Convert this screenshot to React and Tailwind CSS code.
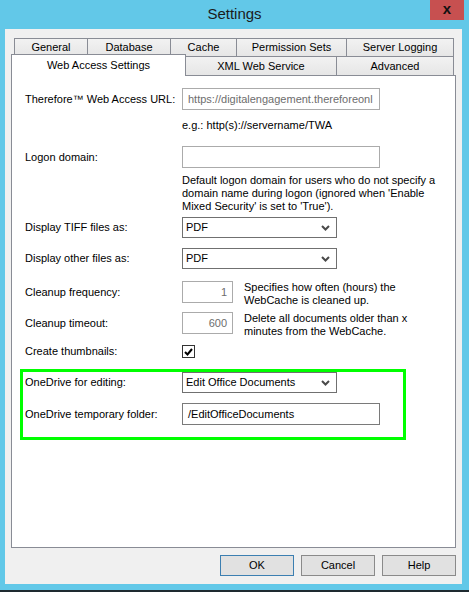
import React from "react";

const font = "font-['Liberation_Sans',Arial,sans-serif]";

const Chevron = () => (
  <svg width="9" height="6" viewBox="0 0 9 6" className="shrink-0">
    <path d="M1 1 L4.5 4.5 L8 1" fill="none" stroke="#4a4a4a" strokeWidth="2" />
  </svg>
);

const Row = ({ label, children, className = "", labelWidth = "w-[157px]" }) => (
  <div className={`flex items-center ${className}`}>
    <div className={`${labelWidth} shrink-0`}>{label}</div>
    {children}
  </div>
);

const TextBox = ({ value = "", width = "w-[198px]", disabled, dark, align = "left" }) => (
  <div
    className={`flex h-[22px] ${width} items-center border bg-white px-[5px] ${
      dark ? "border-[#7a7a7a]" : "border-[#ababab]"
    } ${disabled ? "text-[#6d6d6d]" : "text-black"} ${
      align === "right" ? "justify-end" : ""
    } overflow-hidden whitespace-nowrap`}
  >
    {value}
  </div>
);

const Select = ({ value }) => (
  <div className="flex h-[21px] w-[155px] items-center justify-between border border-[#707070] bg-white pl-[3px] pr-[6px]">
    <span>{value}</span>
    <Chevron />
  </div>
);

const Tab = ({ children, className = "" }) => (
  <div
    className={`flex items-center justify-center border-t border-[#898c95] bg-gradient-to-b from-[#f2f2f2] to-[#e6e6e6] text-black ${className}`}
  >
    {children}
  </div>
);

const Button = ({ children, primary }) => (
  <button
    className={`h-[21px] w-[74px] border bg-[#e1e1e1] text-black ${
      primary ? "border-[#3c7fb1]" : "border-[#8a8a8a]"
    }`}
  >
    {children}
  </button>
);

export default function App() {
  return (
    <div className={`flex h-[592px] w-[469px] flex-col bg-[#62c8e8] text-[11px] text-black ${font}`}>
      {/* Title bar */}
      <div className="grid h-[29px] shrink-0 grid-cols-[1fr_auto_1fr]">
        <div />
        <div className="self-center text-[15px] text-[#1b1b1b]">Settings</div>
        <div className="flex justify-end pr-[5px]">
          <div className="flex h-[20px] w-[34px] items-center justify-center bg-[#c75050] pb-[2px] text-[15px] font-bold text-[#111]">
            x
          </div>
        </div>
      </div>

      {/* Window body */}
      <div className="ml-[5px] flex h-[555px] w-[457px] shrink-0 flex-col bg-[#f0f0f0] px-[6px] pt-[9px]">
        {/* Tabs row 1 */}
        <div className="ml-[3px] flex h-[18px]">
          <Tab className="w-[73px] border-l">General</Tab>
          <Tab className="w-[83px] border-l">Database</Tab>
          <Tab className="w-[66px] border-l">Cache</Tab>
          <Tab className="w-[110px] border-l">Permission Sets</Tab>
          <Tab className="w-[108px] border-x">Server Logging</Tab>
        </div>
        {/* Tabs row 2 */}
        <div className="flex h-[19px] items-start">
          <div className="relative z-10 -mt-[2px] flex h-[22px] w-[175px] items-center justify-center border-x border-t border-[#898c95] bg-white pb-[1px]">
            Web Access Settings
          </div>
          <Tab className="h-[19px] w-[151px] border-r">XML Web Service</Tab>
          <Tab className="h-[19px] w-[117px] border-r">Advanced</Tab>
        </div>

        {/* Tab page */}
        <div className="flex h-[473px] shrink-0 flex-col border border-[#898c95] bg-white">
          <div className="flex flex-col pl-[13px]">
            <Row label="Therefore™ Web Access URL:" className="mt-[12px]">
              <TextBox value="https://digitalengagement.thereforeonl" disabled />
            </Row>
            <div className="ml-[157px] mt-[8px] leading-[14px]">e.g.: http(s)://servername/TWA</div>
            <Row label="Logon domain:" className="mt-[14px]">
              <TextBox />
            </Row>
            <div className="ml-[157px] mt-[6px] w-[260px] leading-[13px]">
              Default logon domain for users who do not specify a domain name during logon (ignored when 'Enable
              Mixed Security' is set to 'True').
            </div>
            <Row label="Display TIFF files as:" className="mt-[4px]">
              <Select value="PDF" />
            </Row>
            <Row label="Display other files as:" className="mt-[10px]">
              <Select value="PDF" />
            </Row>
            <div className="mt-[12px] flex items-start">
              <div className="flex h-[22px] w-[157px] shrink-0 items-center">Cleanup frequency:</div>
              <TextBox value="1" width="w-[51px]" disabled align="right" />
              <div className="ml-[11px] w-[200px] leading-[13px]">
                Specifies how often (hours) the WebCache is cleaned up.
              </div>
            </div>
            <div className="mt-[5px] flex items-start">
              <div className="flex h-[22px] w-[157px] shrink-0 items-center">Cleanup timeout:</div>
              <TextBox value="600" width="w-[51px]" disabled align="right" />
              <div className="ml-[11px] w-[200px] leading-[13px]">
                Delete all documents older than x minutes from the WebCache.
              </div>
            </div>
            <Row label="Create thumbnails:" className="mt-[7px] h-[13px]">
              <div className="flex h-[13px] w-[13px] items-center justify-center border border-[#333] bg-white">
                <svg width="9" height="8" viewBox="0 0 9 8">
                  <path d="M1 4 L3.5 6.5 L8 1" fill="none" stroke="#000" strokeWidth="2" />
                </svg>
              </div>
            </Row>
          </div>

          {/* Highlighted OneDrive group */}
          <div className="ml-[8px] mt-[11px] w-[386px] border-[3px] border-[#00ff00] pb-[12px] pl-[2px]">
            <Row label="OneDrive for editing:">
              <Select value="Edit Office Documents" />
            </Row>
            <Row label="OneDrive temporary folder:" className="mt-[10px]">
              <TextBox value="/EditOfficeDocuments" dark />
            </Row>
          </div>
        </div>

        {/* Buttons */}
        <div className="mt-[7px] flex justify-end gap-[7px]">
          <Button primary>OK</Button>
          <Button>Cancel</Button>
          <Button>Help</Button>
        </div>
      </div>

      <div className="mt-auto h-[2px] bg-[#1e2a30]" />
    </div>
  );
}
